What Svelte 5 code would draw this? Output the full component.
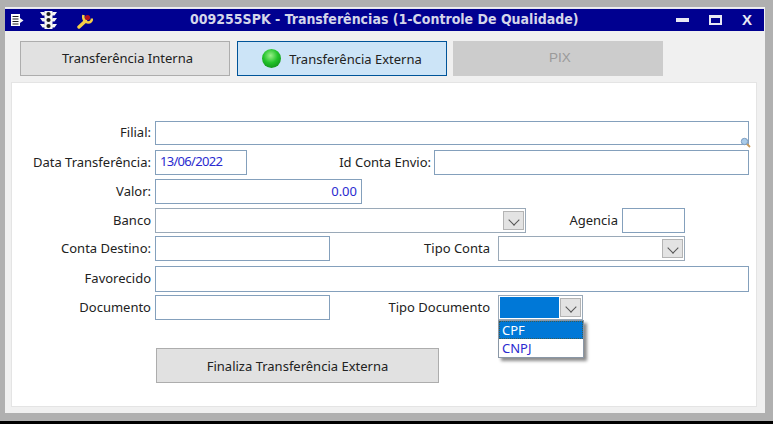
<script>
  const tiposDocumento = ['CPF', 'CNPJ'];
</script>

<div class="frame">
  <header class="titlebar">
    <div class="tools">
      <svg class="ico-note" width="15" height="14" viewBox="0 0 15 14">
        <path d="M1 1h9v12H1z" fill="#fff" />
        <path d="M2.500 3.500h6M2.500 6h6M2.500 8.500h6M2.500 11h6" stroke="#222" stroke-width="1.200" />
        <path d="M10 5 13.500 7.500 10 10z" fill="#f2f2f2" />
      </svg>
      <svg class="ico-light" width="17" height="20" viewBox="0 0 17 20">
        <path d="M4.500 1h8v18h-8z" fill="#f4f4f4" />
        <path d="M0 2h4.500l1 3.500H2.500zM17 2h-4.500l-1 3.500h3zM0 8h4.500l1 3.500H2.500zM17 8h-4.500l-1 3.500h3zM0 14h4.500l1 3.500H2.500zM17 14h-4.500l-1 3.500h3z" fill="#f4f4f4" />
        <circle cx="8.500" cy="4" r="2.100" fill="#1c1c1c" />
        <circle cx="8.500" cy="10" r="2.100" fill="#1c1c1c" />
        <circle cx="8.500" cy="16" r="2.100" fill="#1c1c1c" />
      </svg>
      <svg class="ico-wrench" width="16" height="16" viewBox="0 0 16 16">
        <path d="M2 14 8.500 8" stroke="#f6cf45" stroke-width="3.400" stroke-linecap="round" />
        <path d="M6.500 2C5.500 6 8 9.500 11 9.500c2.500 0 4-2 4-4" fill="none" stroke="#f6cf45" stroke-width="2.600" />
        <circle cx="10.500" cy="4.500" r="2.600" fill="#b5121b" />
      </svg>
    </div>
    <h1>009255SPK - Transferências (1-Controle De Qualidade)</h1>
    <div class="winctl">
      <span class="min"></span>
      <span class="max"></span>
      <span class="close">X</span>
    </div>
  </header>

  <nav class="tabs">
    <button class="tab interna">Transferência Interna</button>
    <button class="tab active"><span class="led"></span>Transferência Externa</button>
    <button class="tab off">PIX</button>
  </nav>

  <section class="panel">
    <div class="row r-filial">
      <label>Filial:</label>
      <div class="input grow">
        <svg class="lupa" width="11" height="11" viewBox="0 0 11 11">
          <path d="M6.500 6.500 10 10" stroke="#c89a5a" stroke-width="1.800" />
          <circle cx="4.500" cy="4.500" r="3.200" fill="#a9cbe8" stroke="#7c9cc0" />
        </svg>
      </div>
    </div>
    <div class="row r-data">
      <label>Data Transferência:</label>
      <div class="input w-data blue data">13/06/2022</div>
      <label class="l-envio">Id Conta Envio:</label>
      <div class="input grow"></div>
    </div>
    <div class="row r-valor">
      <label>Valor:</label>
      <div class="input w-valor blue right">0.00</div>
    </div>
    <div class="row r-banco">
      <label>Banco</label>
      <div class="input combo w-banco"><span class="arrow"><i></i></span></div>
      <label class="l-agencia">Agencia</label>
      <div class="input w-agencia"></div>
    </div>
    <div class="row r-conta">
      <label>Conta Destino:</label>
      <div class="input w-doc"></div>
      <label class="l-tipo">Tipo Conta</label>
      <div class="input combo w-tipo"><span class="arrow"><i></i></span></div>
    </div>
    <div class="row r-fav">
      <label>Favorecido</label>
      <div class="input grow"></div>
    </div>
    <div class="row r-doc">
      <label>Documento</label>
      <div class="input w-doc"></div>
      <label class="l-tipo">Tipo Documento</label>
      <div class="dropwrap">
        <div class="input combo w-tipodoc"><span class="picked"></span><span class="arrow"><i></i></span></div>
        <ul class="dropdown">
          {#each tiposDocumento as tipo, i}
            <li class:sel={i === 0}>{tipo}</li>
          {/each}
        </ul>
      </div>
    </div>
    <button class="finaliza">Finaliza Transferência Externa</button>
  </section>
</div>

<style>
  :global(body) {
    margin: 0;
    background: #000;
  }

  .frame {
    box-sizing: border-box;
    width: 773px;
    height: 421px;
    background: #f0f0f0;
    border: solid #b0b0b0;
    border-width: 7px 8px 8px 5px;
    font-family: 'Noto Sans', sans-serif;
    font-size: 13px;
    color: #222;
    display: flex;
    flex-direction: column;
  }

  .titlebar {
    flex: none;
    height: 23px;
    margin: 1px 1px 0 0;
    background: #000090;
    position: relative;
    display: flex;
    align-items: center;
    justify-content: space-between;
    border-top: 1px solid #e6e6f0;
    box-sizing: border-box;
  }

  .tools {
    display: flex;
    align-items: center;
    padding-left: 5px;
  }

  .ico-light {
    margin-left: 15px;
  }

  .ico-wrench {
    margin-left: 20px;
    margin-top: 2px;
  }

  h1 {
    margin: 0;
    position: absolute;
    left: 185px;
    top: 0;
    line-height: 21px;
    font-family: 'DejaVu Sans Condensed', 'DejaVu Sans', sans-serif;
    font-size: 14px;
    font-weight: bold;
    color: #d4d6ea;
    white-space: nowrap;
  }

  .winctl {
    display: flex;
    align-items: center;
    gap: 20px;
    padding-right: 12px;
  }

  .min {
    width: 13px;
    height: 4px;
    background: #e8e8f4;
  }

  .max {
    box-sizing: border-box;
    width: 13px;
    height: 10px;
    border: 2px solid #e8e8f4;
    border-top-width: 3px;
  }

  .close {
    font-family: 'Liberation Sans', sans-serif;
    font-weight: bold;
    font-size: 15px;
    line-height: 14px;
    color: #e8e8f4;
  }

  .tabs {
    flex: none;
    display: flex;
    padding: 10px 0 0 15px;
    gap: 7px;
  }

  .tab,
  .finaliza {
    box-sizing: border-box;
    height: 35px;
    padding: 0;
    font: inherit;
    color: #222;
    background: #e1e1e1;
    border: 1px solid #adadad;
    display: flex;
    align-items: center;
    justify-content: center;
  }

  .tab {
    width: 210px;
    padding-bottom: 2px;
  }

  .tab.interna {
    padding-left: 5px;
  }

  .tab.active {
    background: #cce4f7;
    border-color: #005499;
    padding-bottom: 0;
  }

  .tab.off {
    margin-left: -1px;
    padding-left: 4px;
    background: #cccccc;
    border-color: #cccccc;
    color: #9a9a9a;
    font-family: 'Liberation Sans', sans-serif;
    font-size: 13.500px;
  }

  .led {
    width: 19px;
    height: 19px;
    border-radius: 50%;
    margin-right: 8px;
    background: radial-gradient(circle at 45% 35%, #9af08a, #22c22a 45%, #0a7a14 100%);
  }

  .panel {
    flex: none;
    box-sizing: border-box;
    height: 325px;
    margin: 6px 8px 0 6px;
    padding: 38px 7px 0 0;
    background: #fff;
    border: 1px solid #e4e4e4;
    display: flex;
    flex-direction: column;
  }

  .row {
    display: flex;
    align-items: center;
    height: 25px;
  }

  .r-filial { height: 24px; }
  .r-data { margin-top: 5px; }
  .r-valor { margin-top: 4px; }
  .r-banco { margin-top: 4px; }
  .r-conta { margin-top: 3px; }
  .r-fav { margin-top: 5px; height: 26px; }
  .r-doc { margin-top: 3px; }

  label {
    box-sizing: border-box;
    width: 143px;
    padding-right: 4px;
    padding-bottom: 2px;
    text-align: right;
    white-space: nowrap;
    flex: none;
  }

  .input {
    box-sizing: border-box;
    height: 100%;
    background: #fff;
    border: 1px solid #84a0bc;
    position: relative;
    display: flex;
    align-items: center;
    padding: 0 4px;
  }

  .grow { flex: 1; }
  .blue { color: #2a2ad0; }
  .right { justify-content: flex-end; padding-bottom: 2px; }
  .data { letter-spacing: -0.7px; padding-bottom: 3px; }

  .w-data { width: 92px; }
  .w-valor { width: 207px; }
  .w-banco { width: 371px; }
  .w-agencia { width: 63px; }
  .w-doc { width: 175px; }
  .w-tipo { width: 187px; }
  .w-tipodoc { width: 85px; }

  .l-envio { width: 187px; padding-right: 3px; }
  .l-agencia { width: 96px; }
  .l-tipo { width: 168px; padding-right: 8px; }

  .lupa {
    position: absolute;
    right: -3px;
    bottom: -4px;
  }

  .combo {
    padding: 0;
    border-color: #9aa9b8;
  }

  .arrow {
    position: absolute;
    right: 1px;
    top: 2px;
    bottom: 2px;
    width: 21px;
    box-sizing: border-box;
    background: #e3e3e3;
    border: 1px solid #b4b4b4;
    display: flex;
    align-items: center;
    justify-content: center;
  }

  .arrow i {
    width: 7px;
    height: 7px;
    border: solid #555;
    border-width: 0 1px 1px 0;
    transform: translateY(-1px) rotate(45deg);
  }

  .dropwrap {
    position: relative;
    height: 100%;
  }

  .picked {
    position: absolute;
    left: 1px;
    top: 1px;
    bottom: 1px;
    width: 59px;
    background: #0078d7;
  }

  .dropdown {
    position: absolute;
    left: 0;
    top: 25px;
    width: 86px;
    box-sizing: border-box;
    margin: 0;
    padding: 0;
    height: 38px;
    list-style: none;
    background: #fff;
    border: 1px solid #8a97a6;
    box-shadow: 3px 3px 3px rgba(0, 0, 0, 0.45);
    color: #2a2ad0;
  }

  .dropdown li {
    box-sizing: border-box;
    height: 18px;
    line-height: 16px;
    padding-left: 2px;
    border: 1px dotted transparent;
  }

  .dropdown li.sel {
    background: #0078d7;
    color: #fff;
    border-color: #3f5a50;
  }

  .finaliza {
    width: 283px;
    margin: 28px 0 0 144px;
    flex: none;
  }
</style>
